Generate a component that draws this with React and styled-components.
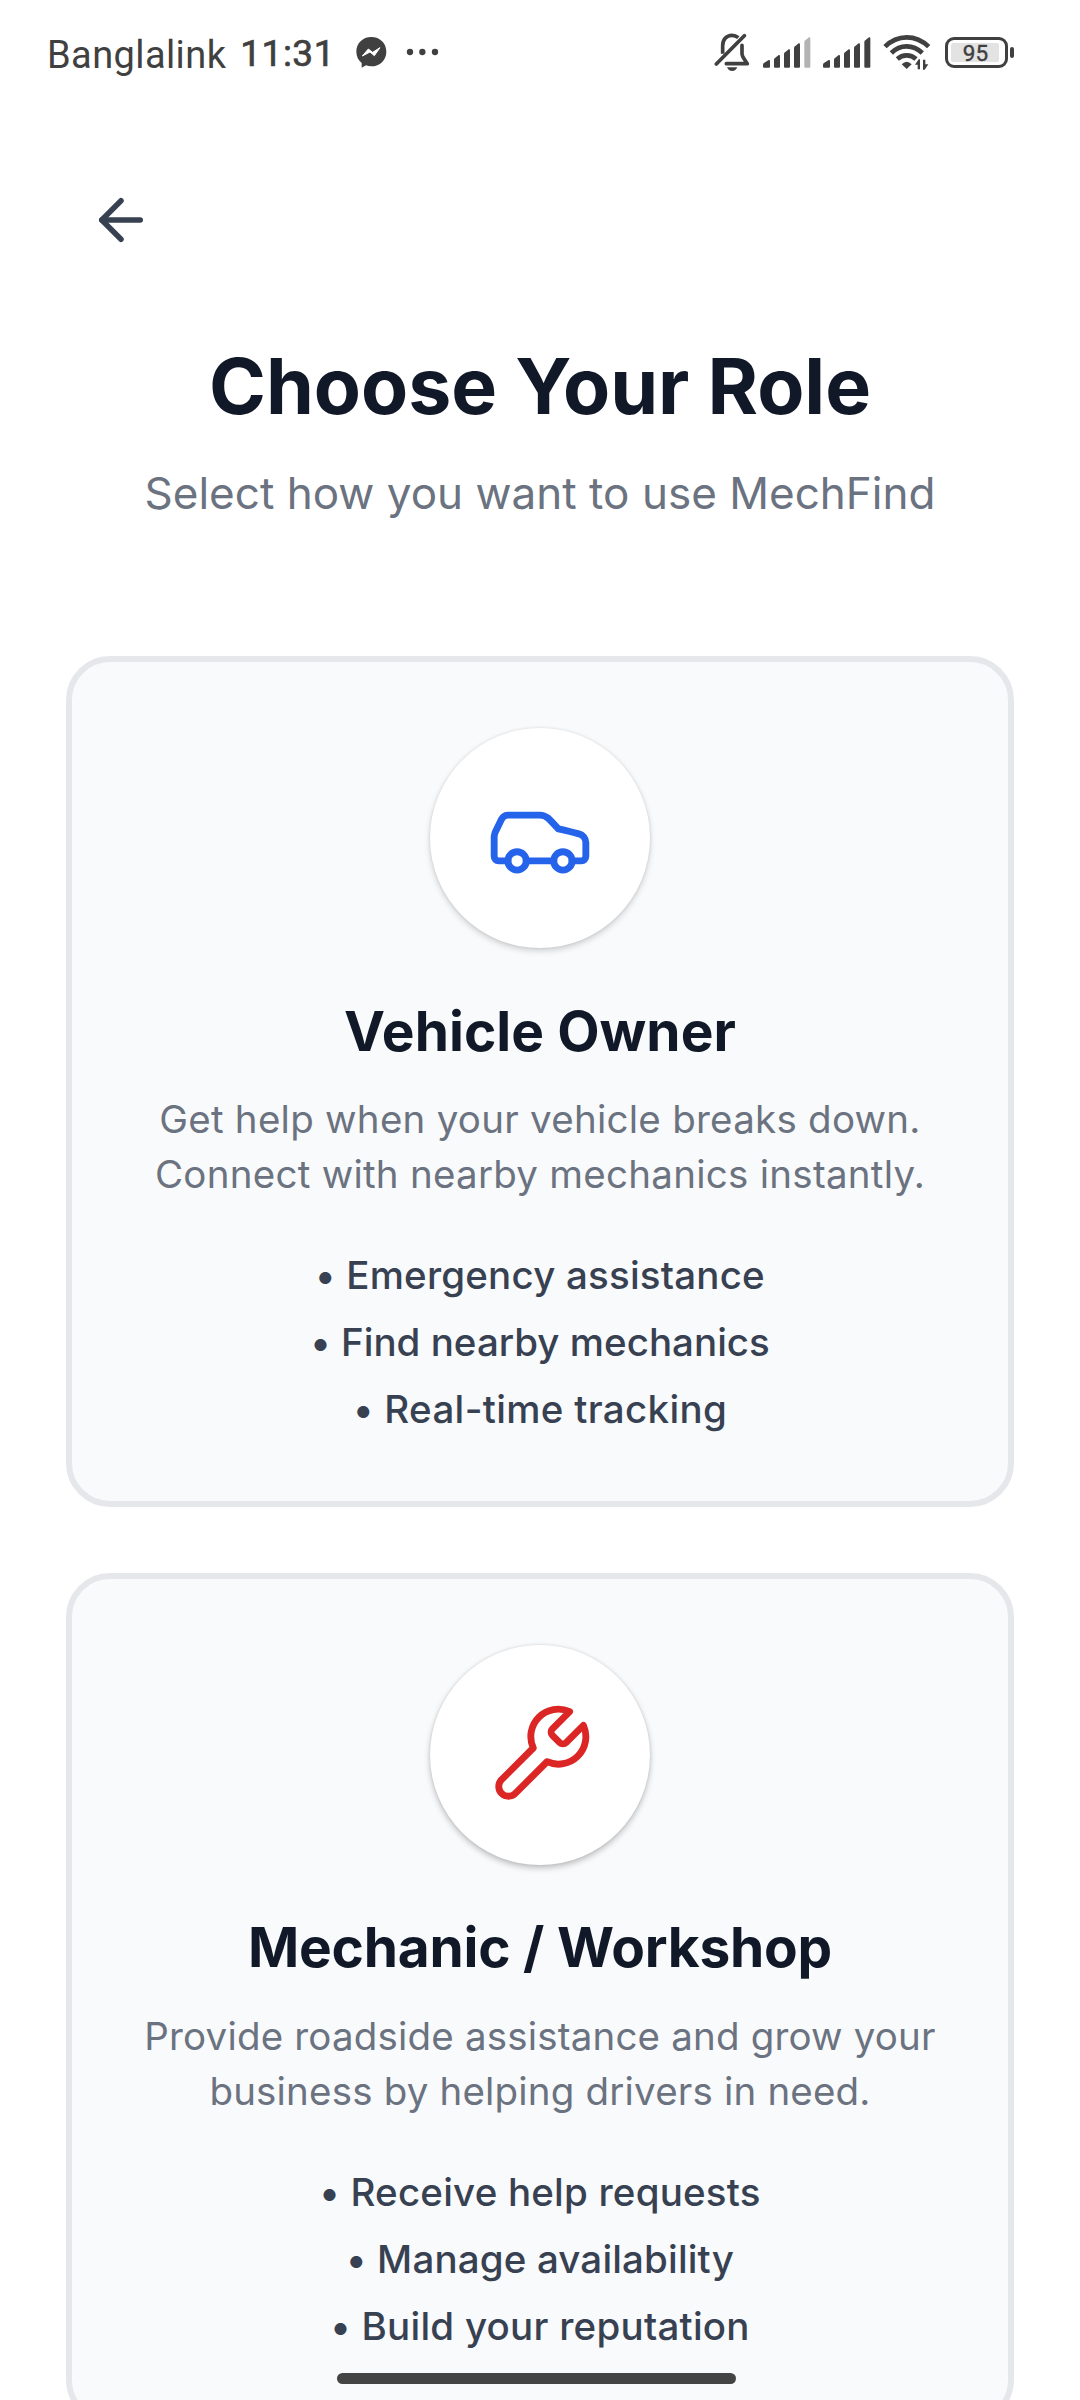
import React from "react";
import styled, { createGlobalStyle } from "styled-components";

const GlobalStyle = createGlobalStyle`
  *, *::before, *::after { box-sizing: border-box; }
  html, body { margin: 0; padding: 0; background: #ffffff; }
  body { font-family: Inter, "Liberation Sans", sans-serif; overflow: hidden; }
  svg { display: block; flex: none; }
`;

const Screen = styled.main`
  position: relative;
  width: 1080px;
  height: 2400px;
  overflow: hidden;
  background: #ffffff;
`;

const StatusBar = styled.header`
  display: flex;
  justify-content: space-between;
  height: 108px;
  padding: 29px 66px 0 47px;
  color: #404040;
  font-family: Roboto, "Noto Sans", sans-serif;
`;

const StatusGroup = styled.div`
  display: flex;
  align-items: center;
  height: 46px;
`;

const Carrier = styled.span`
  font-size: 38px;
  line-height: 46px;
  letter-spacing: 0.4px;
  padding-top: 5px;
`;

const Clock = styled.span`
  margin-left: 14px;
  font-size: 37px;
  font-weight: 400;
  line-height: 46px;
  letter-spacing: 0.5px;
  padding-top: 4px;
  -webkit-text-stroke: 0.7px #404040;
`;

const Spacer = styled.span`
  flex: none;
  width: ${(p) => p.$w}px;
`;

const Battery = styled.div`
  display: flex;
  align-items: center;
`;

const BatteryShell = styled.div`
  width: 63px;
  height: 31px;
  padding: 3px;
  border: 3px solid #404040;
  border-radius: 9px;
`;

const BatteryLevel = styled.div`
  width: 48px;
  height: 19px;
  padding-left: 1px;
  border-radius: 2px;
  background: #e3e3e3;
  color: #404040;
  font-size: 22.5px;
  font-weight: 400;
  line-height: 20px;
  text-align: center;
  -webkit-text-stroke: 0.4px #404040;
`;

const BatteryCap = styled.div`
  width: 4px;
  height: 11px;
  margin-left: 2px;
  border-radius: 2px;
  background: #404040;
`;

const BackButton = styled.button`
  display: flex;
  margin: 79px 0 0 88px;
  padding: 0;
  border: 0;
  background: none;
  color: #374151;
`;

const Heading = styled.section`
  margin-top: 86.5px;
  text-align: center;
`;

const Title = styled.h1`
  margin: 0;
  color: #111827;
  font-size: 77px;
  font-weight: 700;
  line-height: 93px;
  letter-spacing: -0.05px;
`;

const Subtitle = styled.p`
  margin: 27.5px 0 0;
  color: #6b7280;
  font-size: 44px;
  line-height: 66px;
  letter-spacing: 0.02px;
`;

const RoleList = styled.section`
  display: flex;
  flex-direction: column;
  gap: 66px;
  margin-top: 130px;
  padding: 0 66px;
`;

const Card = styled.article`
  display: flex;
  flex: none;
  flex-direction: column;
  align-items: center;
  height: 850.75px;
  padding: 66px 55px;
  border: 6px solid #e5e7eb;
  border-radius: 44px;
  background: #f9fafc;
  text-align: center;
`;

const IconDisc = styled.div`
  display: flex;
  flex: none;
  align-items: center;
  justify-content: center;
  width: 220px;
  height: 220px;
  border-radius: 50%;
  background: #ffffff;
  color: ${(p) => p.$color};
  box-shadow: 0 3px 6px rgba(0, 0, 0, ${(p) => p.$shade}), 0 0 3px rgba(0, 0, 0, 0.1);
`;

const CardTitle = styled.h2`
  margin: 49.5px 0 28.5px;
  color: #111827;
  font-size: 55px;
  font-weight: 700;
  line-height: 66px;
  letter-spacing: ${(p) => p.$tracking}px;
  white-space: nowrap;
`;

const CardText = styled.p`
  margin: 0;
  color: #6b7280;
  font-size: 38.5px;
  line-height: 55px;
  letter-spacing: ${(p) => p.$tracking}px;
  white-space: nowrap;
`;

const Features = styled.ul`
  display: flex;
  flex-direction: column;
  gap: 22px;
  margin: 51px 0 0;
  padding: 0;
  list-style: none;
`;

const Feature = styled.li`
  color: #374151;
  font-size: 38.5px;
  font-weight: 500;
  line-height: 45px;
  letter-spacing: ${(p) => p.$tracking}px;
  white-space: nowrap;
`;

const HomeIndicator = styled.div`
  position: absolute;
  left: 337px;
  bottom: 16px;
  width: 399px;
  height: 11px;
  border-radius: 6px;
  background: #444444;
`;

const Stroke = ({ size, weight = 2, children }) => (
  <svg width={size} height={size} viewBox="0 0 24 24" fill="none" stroke="currentColor" strokeWidth={weight} strokeLinecap="round" strokeLinejoin="round">
    {children}
  </svg>
);

const CarIcon = () => (
  <Stroke size={110} weight={1.5}>
    <path d="M19 17h2c.6 0 1-.4 1-1v-3c0-.9-.7-1.7-1.5-1.9C18.7 10.6 16 10 16 10s-1.3-1.4-2.2-2.3c-.5-.4-1.1-.7-1.8-.7H5c-.6 0-1.1.4-1.4.9l-1.4 2.9A3.7 3.7 0 0 0 2 12v4c0 .6.4 1 1 1h2" />
    <circle cx="7" cy="17" r="2" />
    <path d="M9 17h6" />
    <circle cx="17" cy="17" r="2" />
  </Stroke>
);

const WrenchIcon = () => (
  <Stroke size={110} weight={1.5}>
    <path d="M14.7 6.3a1 1 0 0 0 0 1.4l1.6 1.6a1 1 0 0 0 1.4 0l3.77-3.77a6 6 0 0 1-7.94 7.94l-6.91 6.91a2.12 2.12 0 0 1-3-3l6.91-6.91a6 6 0 0 1 7.94-7.94l-3.76 3.76z" />
  </Stroke>
);

const MessengerIcon = () => (
  <svg width="31" height="31" viewBox="0 0 93 93">
    <path d="M46 0C20 0 1 19 1 44c0 14 6 26 16 34v14l13-7c5 2 10 3 16 3 26 0 45-19 45-44S72 0 46 0z" fill="#404040" />
    <path d="M19 57l18-21 13 10 22-14-17 24-13-11z" fill="#fff" stroke="#fff" strokeWidth="3" strokeLinejoin="round" />
  </svg>
);

const MoreIcon = () => (
  <svg width="34" height="8" viewBox="0 0 102 24" fill="#404040">
    <circle cx="12" cy="12" r="9.5" />
    <circle cx="49" cy="12" r="9.5" />
    <circle cx="87" cy="12" r="9.5" />
  </svg>
);

const MutedBellIcon = () => (
  <svg width="36" height="38" viewBox="43 70 108 114" fill="none" stroke="#404040">
    <path d="M69 132v-24c0-18 11-31 28-31 8 0 14 3 19 7" strokeWidth="11" />
    <path d="M50 163L134 78" strokeWidth="11" strokeLinecap="round" />
    <path d="M127 107v26q1 7 6 14l10 15H80" strokeWidth="11" strokeLinecap="round" strokeLinejoin="round" />
    <path d="M82 173h31c-3 7-8 11-15.500 11S85 180 82 173z" fill="#404040" stroke="none" />
  </svg>
);

const signalBars = [
  [0, 68, 21],
  [33, 53, 18],
  [63, 36, 18],
  [93, 18, 18],
  [124, 0, 18],
];

const SignalIcon = ({ weak }) => (
  <svg width="48" height="31" viewBox="0 0 144 93">
    {signalBars.map(([x, y, w], i) => (
      <path
        key={x}
        d={`M${x + 3} 92h${w - 6}q3 0 3-3V${y + 4}q0-4-4-3L${x + 4} ${y + 9}q-4 2-4 6V89q0 3 3 3z`}
        fill={weak && i === 4 ? "#b3b3b3" : "#404040"}
      />
    ))}
  </svg>
);

const WifiIcon = () => (
  <svg width="48" height="36" viewBox="549 74 144 108" fill="none" stroke="#404040" strokeWidth="14">
    <path d="M555 112Q583 84 620 84T686 112" />
    <path d="M574 131Q594 111 620 111T667 131" />
    <path d="M592 149Q604 138 620 138T648 149" />
    <path d="M605 165q15-15 30 0l-15 14z" fill="#404040" stroke="none" />
    <path d="M645 166l11-16h4v30h-7v-14zM685 165l-11 16h-5v-30h7v14z" fill="#404040" stroke="none" />
  </svg>
);

const roles = [
  {
    title: "Vehicle Owner",
    titleTracking: 0.05,
    textTracking: 0.26,
    color: "#2563eb",
    shade: 0.17,
    Icon: CarIcon,
    lines: ["Get help when your vehicle breaks down.", "Connect with nearby mechanics instantly."],
    features: [
      ["Emergency assistance", 0.2],
      ["Find nearby mechanics", 0.02],
      ["Real-time tracking", 0.33],
    ],
  },
  {
    title: "Mechanic / Workshop",
    titleTracking: -0.22,
    textTracking: 0.18,
    color: "#dc2626",
    shade: 0.24,
    Icon: WrenchIcon,
    lines: ["Provide roadside assistance and grow your", "business by helping drivers in need."],
    features: [
      ["Receive help requests", 0.2],
      ["Manage availability", 0.15],
      ["Build your reputation", 0.25],
    ],
  },
];

const RoleCard = ({ title, titleTracking, textTracking, color, shade, Icon, lines, features }) => (
  <Card>
    <IconDisc $color={color} $shade={shade}>
      <Icon />
    </IconDisc>
    <CardTitle $tracking={titleTracking}>{title}</CardTitle>
    <CardText $tracking={textTracking}>
      {lines[0]}
      <br />
      {lines[1]}
    </CardText>
    <Features>
      {features.map(([label, tracking]) => (
        <Feature key={label} $tracking={tracking}>{`• ${label}`}</Feature>
      ))}
    </Features>
  </Card>
);

export default function App() {
  return (
    <>
      <GlobalStyle />
      <Screen>
        <StatusBar>
          <StatusGroup>
            <Carrier>Banglalink</Carrier>
            <Clock>11:31</Clock>
            <Spacer $w={21} />
            <MessengerIcon />
            <Spacer $w={19} />
            <MoreIcon />
          </StatusGroup>
          <StatusGroup>
            <MutedBellIcon />
            <Spacer $w={13} />
            <SignalIcon weak />
            <Spacer $w={12} />
            <SignalIcon />
            <Spacer $w={12} />
            <WifiIcon />
            <Spacer $w={14} />
            <Battery>
              <BatteryShell>
                <BatteryLevel>95</BatteryLevel>
              </BatteryShell>
              <BatteryCap />
            </Battery>
          </StatusGroup>
        </StatusBar>
        <BackButton aria-label="Back">
          <Stroke size={66}>
            <path d="m12 19-7-7 7-7" />
            <path d="M19 12H5" />
          </Stroke>
        </BackButton>
        <Heading>
          <Title>Choose Your Role</Title>
          <Subtitle>Select how you want to use MechFind</Subtitle>
        </Heading>
        <RoleList>
          {roles.map((role) => (
            <RoleCard key={role.title} {...role} />
          ))}
        </RoleList>
        <HomeIndicator />
      </Screen>
    </>
  );
}
